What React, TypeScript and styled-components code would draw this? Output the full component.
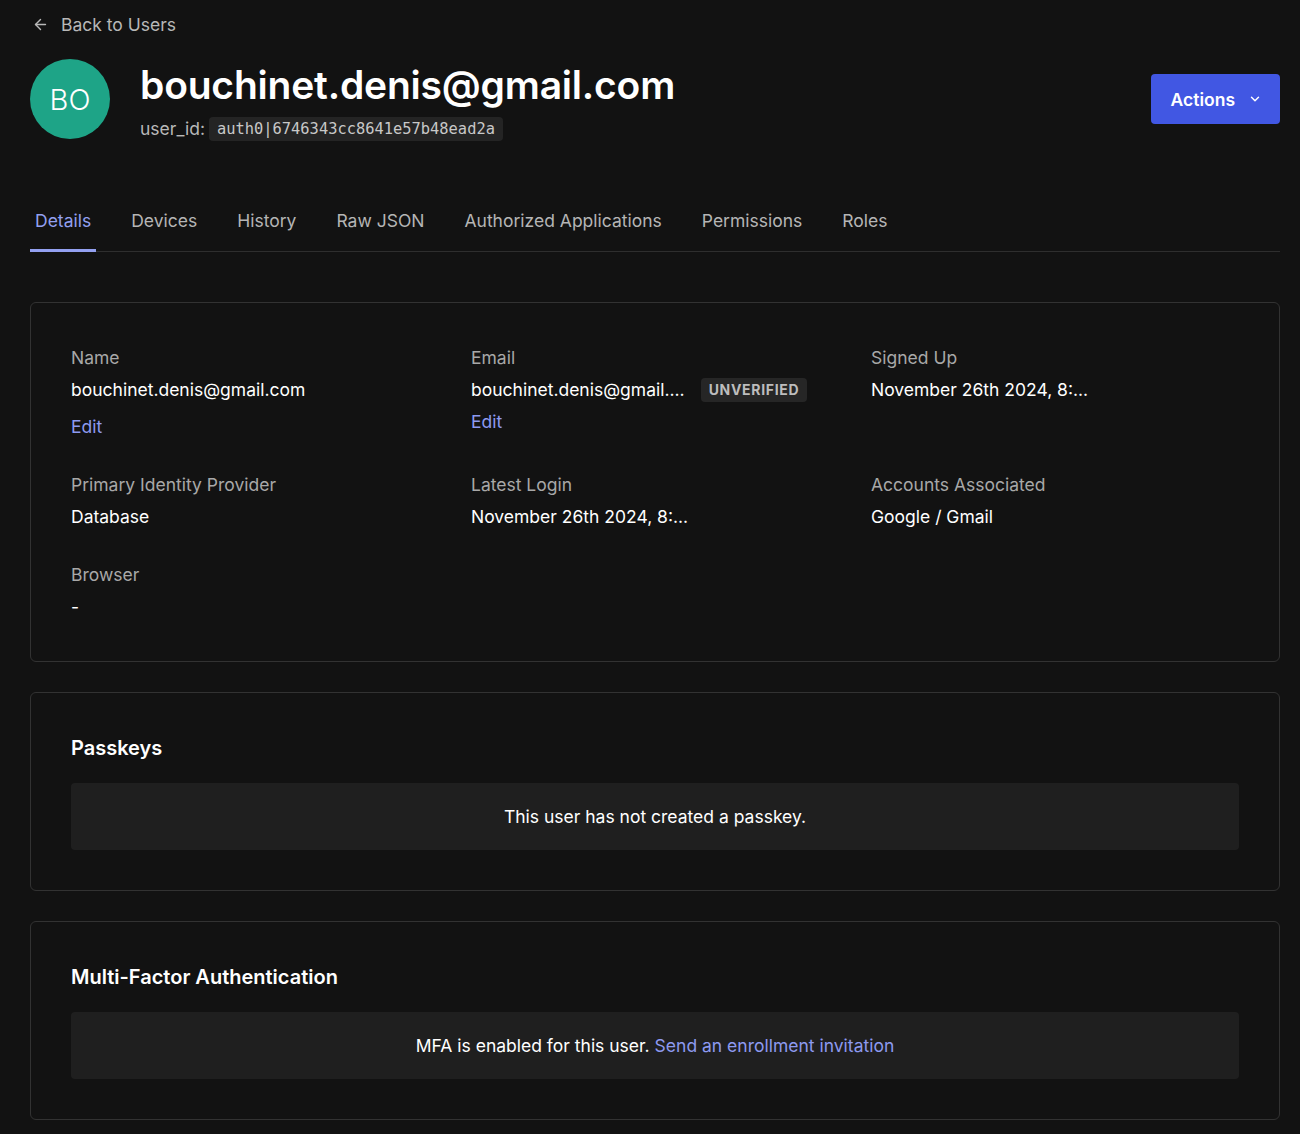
import styled, { createGlobalStyle } from 'styled-components';

const GlobalStyle = createGlobalStyle`
  html, body {
    margin: 0;
    padding: 0;
    background: #121212;
  }
  body {
    font-family: Inter, "Noto Sans", sans-serif;
    color: #ffffff;
  }
  * {
    box-sizing: border-box;
  }
`;

const Page = styled.div`
  padding: 11px 20px 14px 30px;
  background: #121212;
  min-height: 1134px;
`;

const BackLink = styled.a`
  display: inline-flex;
  align-items: center;
  gap: 12px;
  color: #b8b8b8;
  font-size: 17.5px;
  text-decoration: none;
  padding-left: 2px;
  height: 26px;
`;

const Header = styled.div`
  display: flex;
  align-items: center;
  justify-content: space-between;
  margin-top: 22px;
`;

const Identity = styled.div`
  display: flex;
  align-items: center;
  gap: 30px;
`;

const Avatar = styled.div`
  width: 80px;
  height: 80px;
  border-radius: 50%;
  background: #1ea487;
  color: #ffffff;
  display: flex;
  align-items: center;
  justify-content: center;
  font-size: 29px;
  font-weight: 300;
`;

const TitleBlock = styled.div`
  padding-top: 4px;
  margin: -3px 0 -3px;
`;

const Title = styled.h1`
  margin: 0;
  font-size: 39px;
  font-weight: 600;
  line-height: 46px;
  letter-spacing: -0.2px;
`;

const UserIdRow = styled.div`
  display: flex;
  align-items: center;
  gap: 4px;
  color: #b8b8b8;
  font-size: 17.5px;
  margin-top: 9px;
`;

const Code = styled.code`
  font-family: "DejaVu Sans Mono", "Liberation Mono", monospace;
  font-size: 15.4px;
  line-height: 19px;
  background: #242424;
  color: #c8c8c8;
  padding: 3px 8px 2px;
  border-radius: 4px;
`;

const ActionsButton = styled.button`
  display: flex;
  align-items: center;
  gap: 13px;
  height: 50px;
  padding: 0 18px 0 20px;
  background: #4157e3;
  color: #ffffff;
  border: none;
  border-radius: 4px;
  font-family: inherit;
  font-size: 17.5px;
  font-weight: 600;
`;

const Tabs = styled.nav`
  display: flex;
  gap: 30px;
  margin-top: 71px;
  border-bottom: 1px solid #2e2e2e;
`;

const Tab = styled.a<{ active?: boolean }>`
  padding: 0 5px 18px;
  font-size: 17.5px;
  color: ${(p) => (p.active ? '#93a0f0' : '#b5b5b5')};
  border-bottom: 3px solid ${(p) => (p.active ? '#93a0f0' : 'transparent')};
  margin-bottom: -1px;
  text-decoration: none;
`;

const Card = styled.section`
  border: 1px solid #323232;
  border-radius: 6px;
  padding: 40px 40px 40px;
  margin-top: 30px;

  &:first-of-type {
    margin-top: 50px;
    padding: 43px 40px 42px;
  }
`;

const DetailsGrid = styled.div`
  display: grid;
  grid-template-columns: repeat(3, 1fr);
  column-gap: 32px;
  row-gap: 34px;
`;

const Field = styled.div`
  display: flex;
  flex-direction: column;
  gap: 8px;
`;

const Label = styled.div`
  font-size: 17.5px;
  line-height: 24px;
  color: #a8a8a8;
`;

const Value = styled.div`
  font-size: 17.5px;
  line-height: 24px;
  color: #ffffff;
  display: flex;
  align-items: center;
  gap: 16px;
`;

const EditLink = styled.a<{ tight?: boolean }>`
  font-size: 17.5px;
  line-height: 24px;
  color: #8d9af0;
  text-decoration: none;
  margin-top: ${(p) => (p.tight ? '0px' : '5px')};
`;

const Badge = styled.span`
  font-size: 14px;
  line-height: 18px;
  font-weight: 700;
  letter-spacing: 0.7px;
  color: #bdbdbd;
  background: #262626;
  border-radius: 4px;
  padding: 3px 8px;
`;

const SectionTitle = styled.h2`
  margin: 0 0 20px;
  font-size: 20px;
  font-weight: 600;
  line-height: 30px;
`;

const EmptyBox = styled.div`
  background: #1f1f1f;
  border-radius: 4px;
  height: 67px;
  display: flex;
  align-items: center;
  justify-content: center;
  font-size: 17.5px;
  color: #ffffff;
`;

const InlineLink = styled.a`
  color: #8d9af0;
  text-decoration: none;
  margin-left: 5px;
`;

const ArrowLeft = () => (
  <svg width="17" height="17" viewBox="0 0 24 24" fill="none" stroke="#b8b8b8" strokeWidth="2" strokeLinecap="round" strokeLinejoin="round">
    <path d="M19 12H5" />
    <path d="M12 19l-7-7 7-7" />
  </svg>
);

const Chevron = () => (
  <svg width="14" height="14" viewBox="0 0 24 24" fill="none" stroke="#ffffff" strokeWidth="2.5" strokeLinecap="round" strokeLinejoin="round">
    <path d="M6 9l6 6 6-6" />
  </svg>
);

const tabs = ['Details', 'Devices', 'History', 'Raw JSON', 'Authorized Applications', 'Permissions', 'Roles'];

export default function App() {
  return (
    <>
      <GlobalStyle />
      <Page>
        <BackLink href="#">
          <ArrowLeft />
          Back to Users
        </BackLink>

        <Header>
          <Identity>
            <Avatar>BO</Avatar>
            <TitleBlock>
              <Title>bouchinet.denis@gmail.com</Title>
              <UserIdRow>
                user_id: <Code>auth0|6746343cc8641e57b48ead2a</Code>
              </UserIdRow>
            </TitleBlock>
          </Identity>
          <ActionsButton>
            Actions
            <Chevron />
          </ActionsButton>
        </Header>

        <Tabs>
          {tabs.map((t) => (
            <Tab key={t} href="#" active={t === 'Details'}>
              {t}
            </Tab>
          ))}
        </Tabs>

        <Card>
          <DetailsGrid>
            <Field>
              <Label>Name</Label>
              <Value>bouchinet.denis@gmail.com</Value>
              <EditLink href="#">Edit</EditLink>
            </Field>
            <Field>
              <Label>Email</Label>
              <Value>
                bouchinet.denis@gmail....
                <Badge>UNVERIFIED</Badge>
              </Value>
              <EditLink href="#" tight>Edit</EditLink>
            </Field>
            <Field>
              <Label>Signed Up</Label>
              <Value>November 26th 2024, 8:...</Value>
            </Field>
            <Field>
              <Label>Primary Identity Provider</Label>
              <Value>Database</Value>
            </Field>
            <Field>
              <Label>Latest Login</Label>
              <Value>November 26th 2024, 8:...</Value>
            </Field>
            <Field>
              <Label>Accounts Associated</Label>
              <Value>Google / Gmail</Value>
            </Field>
            <Field>
              <Label>Browser</Label>
              <Value>-</Value>
            </Field>
          </DetailsGrid>
        </Card>

        <Card>
          <SectionTitle>Passkeys</SectionTitle>
          <EmptyBox>This user has not created a passkey.</EmptyBox>
        </Card>

        <Card>
          <SectionTitle>Multi-Factor Authentication</SectionTitle>
          <EmptyBox>
            MFA is enabled for this user.
            <InlineLink href="#">Send an enrollment invitation</InlineLink>
          </EmptyBox>
        </Card>
      </Page>
    </>
  );
}
